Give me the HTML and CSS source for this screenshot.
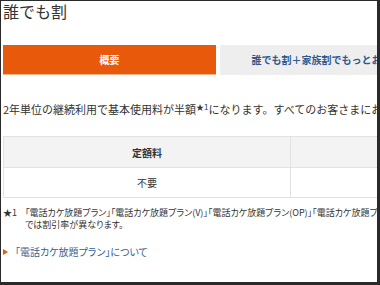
FILE: index.html
```html
<!DOCTYPE html>
<html lang="ja">
<head>
    <meta charset="UTF-8">
    <title>誰でも割</title>
    <link rel="stylesheet" href="styles.css">
</head>
<body>
    <div class="pantalla">
        <h1>誰でも割</h1>

        <div class="tabs">
            <div class="tab activo">概要</div>
            <div class="tab">誰でも割＋家族割でもっとおトク</div>
        </div>

        <p class="intro">2年単位の継続利用で基本使用料が半額<sup>★1</sup>になります。すべてのお客さまにおすすめです。</p>

        <table class="tabla">
            <tr>
                <th>定額料</th>
                <th>契約期間</th>
            </tr>
            <tr>
                <td>不要</td>
                <td>2年</td>
            </tr>
        </table>

        <div class="nota">
            <span class="marca">★1</span>
            <span class="texto">「電話カケ放題プラン」「電話カケ放題プラン(V)」「電話カケ放題プラン(OP)」「電話カケ放題プラン(VK)」<br>では割引率が異なります。</span>
        </div>

        <a class="enlace" href="#"><span class="flecha"></span>「電話カケ放題プラン」について</a>
    </div>
</body>
</html>
```

FILE: styles.css
```css
body {
    margin: 0;
    font-family: "Noto Sans CJK JP", "Noto Sans", sans-serif;
    color: #333;
    background: #fff;
}
.pantalla {
    width: 380px;
    height: 285px;
    box-sizing: border-box;
    border-top: 1px solid #2a2a2a;
    border-left: 1px solid #2a2a2a;
    border-right: 3px solid #2a2a2a;
    border-bottom: 3px solid #2a2a2a;
    padding-left: 2px;
    overflow: hidden;
    white-space: nowrap;
}
h1 {
    margin: 0;
    font-size: 16px;
    font-weight: normal;
    line-height: 21px;
    color: #333;
}
.tabs {
    display: flex;
    gap: 4px;
    margin-top: 23px;
    width: 600px;
}
.tab {
    flex: 0 0 213px;
    height: 29px;
    line-height: 29px;
    text-align: center;
    font-size: 10px;
    font-weight: bold;
    background: #eeeeee;
    color: #2a5a8e;
    border-bottom: 1px solid #eeeeee;
}
.tab.activo {
    background: #e8590c;
    color: #fff;
    border-bottom-color: #f6b48a;
}
.intro {
    margin: 26px 0 0;
    font-size: 11px;
    line-height: 16px;
}
.intro sup {
    font-size: 8px;
    line-height: 0;
    vertical-align: 4px;
}
.tabla {
    margin-top: 19px;
    border-collapse: collapse;
    width: 580px;
    table-layout: fixed;
}
.tabla th,
.tabla td {
    border: 1px solid #e2e2e2;
    height: 29px;
    padding: 0;
    text-align: center;
    font-size: 10px;
}
.tabla th {
    background: #f3f3f3;
    height: 30px;
}
.tabla th:first-child {
    width: 286px;
}
.nota {
    display: flex;
    margin-top: 9px;
    font-size: 9px;
    line-height: 12px;
    font-feature-settings: "palt";
}
.marca {
    flex: 0 0 22px;
}
.enlace {
    display: flex;
    align-items: center;
    margin-top: 14px;
    font-size: 10px;
    line-height: 14px;
    color: #3a5f8f;
    text-decoration: none;
    font-feature-settings: "palt";
}
.flecha {
    width: 0;
    height: 0;
    border-left: 5px solid #e8590c;
    border-top: 3px solid transparent;
    border-bottom: 3px solid transparent;
    margin-right: 7px;
}
```
